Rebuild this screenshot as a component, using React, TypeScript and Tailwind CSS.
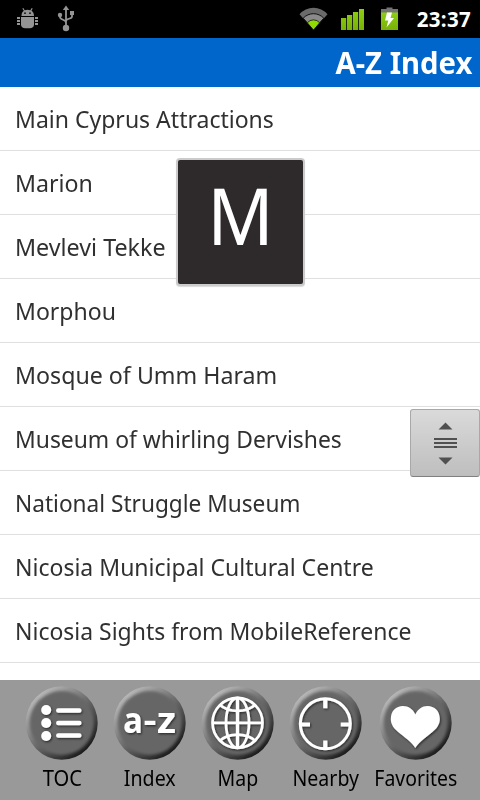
import type { ReactNode } from "react";
import clsx from "clsx";

// fit: horizontal scale that gives the title its condensed width
const entries = [
  { title: "Main Cyprus Attractions", fit: "scale-x-[0.959]" },
  { title: "Marion", fit: "scale-x-[0.965]" },
  { title: "Mevlevi Tekke", fit: "scale-x-[0.97]" },
  { title: "Morphou", fit: "scale-x-[0.96]" },
  { title: "Mosque of Umm Haram", fit: "scale-x-[0.966]" },
  { title: "Museum of whirling Dervishes", fit: "scale-x-[0.953]" },
  { title: "National Struggle Museum", fit: "scale-x-[0.943]" },
  { title: "Nicosia Municipal Cultural Centre", fit: "scale-x-[0.959]" },
  { title: "Nicosia Sights from MobileReference", fit: "scale-x-[0.957]" },
];

function StatusBar() {
  return (
    <div className="flex h-[38px] shrink-0 items-center bg-black text-white">
      <svg className="ml-4 h-[38px] w-6" viewBox="16 0 24 38" fill="#949494">
        <path d="M21.500 16c0-2.500.8-4 2.300-5.200L22.300 8.500l1-.6 1.400 2.300a8 8 0 0 1 5.600 0l1.400-2.300 1 .6-1.200 2.300c1.700 1.200 2.500 2.700 2.500 5.200z" />
        <path d="M21 17h13v7.500c0 2.500-1.800 3.700-4.200 3.700h-4.600c-2.400 0-4.200-1.200-4.200-3.700z" />
        <path d="M17 17h3v2h-3zM17 20h3v2h-3zM17 23h3v2h-3zM35 17h3v2h-3zM35 20h3v2h-3zM35 23h3v2h-3z" />
        <circle cx="25" cy="13.200" r=".9" fill="#111" />
        <circle cx="30" cy="13.200" r=".9" fill="#111" />
      </svg>
      <svg className="ml-4 h-[38px] w-5" viewBox="56 0 20 38" fill="none" stroke="#949494" strokeWidth="1.800">
        <path d="M66 9v18M60 16v1c0 3 6 2.500 6 5.500M72 14v2.500c0 3-6 1.500-6 4.500" />
        <path d="m66 5.500 3.200 4.500h-6.400z" fill="#949494" stroke="none" />
        <circle cx="66" cy="28" r="3.200" fill="#949494" stroke="none" />
        <circle cx="60" cy="15" r="2.200" fill="#949494" stroke="none" />
        <path d="M70 11h4v4h-4z" fill="#949494" stroke="none" />
      </svg>

      <svg className="ml-auto h-[38px] w-8" viewBox="299 0 32 38">
        <path d="M299.500 14.200a18.500 18.500 0 0 1 28 0l-4 4.500h-20z" fill="#6a6a6a" />
        <path d="M303.200 18.200a14 14 0 0 1 20.600 0l-4.500 5h-11.600z" fill="#8a8a8a" stroke="#111" strokeWidth="1" />
        <path d="M307.300 22.800a8 8 0 0 1 12.400 0L313.500 30z" fill="#8edc00" stroke="#111" strokeWidth=".8" />
      </svg>
      <svg className="ml-[9px] h-[38px] w-6" viewBox="339 0 24 38">
        <defs>
          <linearGradient id="lime" x1="0" y1="0" x2="0" y2="1">
            <stop offset="0" stopColor="#8fce14" />
            <stop offset="1" stopColor="#78b206" />
          </linearGradient>
        </defs>
        <path d="M340 18h5.200v12H340zM346 15h5.200v15H346zM352 12h5.200v18H352zM358 9h5v21h-5z" fill="url(#lime)" />
      </svg>
      <svg className="ml-[17px] h-[38px] w-[18px]" viewBox="380.500 0 18 38">
        <path d="M386 7.500h6V9h5.500v4h-17V9h5.500z" fill="#747474" />
        <path d="M380.500 12.500h17V30h-17z" fill="url(#lime)" />
        <path d="M386.500 12.500h5l-1.500 5.500h3.500l-7.500 9.500 1.800-7h-3.300z" fill="#fff" />
      </svg>
      <span className="mr-[9px] ml-[18px] flex w-[54px] justify-end font-['Open_Sans',sans-serif] text-[20.5px] font-bold tracking-[0.3px] whitespace-nowrap">
        23:37
      </span>
    </div>
  );
}

function RoundButton({ children }: { children: ReactNode }) {
  return (
    <svg className="h-[76px] w-[76px]" viewBox="0 0 76 76">
      <defs>
        <linearGradient id="rim" x1="0.150" y1="0.100" x2="0.850" y2="0.900">
          <stop offset="0" stopColor="#bcbcbc" />
          <stop offset="0.300" stopColor="#8c8c8c" />
          <stop offset="0.600" stopColor="#5a5a5a" />
          <stop offset="1" stopColor="#161616" />
        </linearGradient>
        <filter id="soft" x="-20%" y="-20%" width="140%" height="140%">
          <feGaussianBlur stdDeviation="1.600" />
        </filter>
        <filter id="drop" x="-20%" y="-20%" width="150%" height="150%">
          <feDropShadow dx="1" dy="1.200" stdDeviation="0.900" floodColor="#000" floodOpacity="0.600" />
        </filter>
      </defs>
      <ellipse cx="37.700" cy="38" rx="36" ry="36.700" fill="url(#rim)" />
      <circle cx="37.700" cy="38" r="32" fill="#666" filter="url(#soft)" />
      <g filter="url(#drop)">{children}</g>
    </svg>
  );
}

function TocIcon() {
  return (
    <g fill="#fff">
      <circle cx="22.200" cy="25" r="5" />
      <circle cx="22.200" cy="38" r="5" />
      <circle cx="22.200" cy="51" r="5" />
      <path d="M34.300 25.500h21M34.300 38h21M34.300 50.500h21" stroke="#fff" strokeWidth="4.500" strokeLinecap="round" />
    </g>
  );
}

function AzIcon() {
  return (
    <g fill="#fff" fontFamily="'Open Sans', sans-serif" fontWeight="700" fontSize="36">
      <text x="11" y="47.500" textLength="20" lengthAdjust="spacingAndGlyphs">
        a
      </text>
      <text x="31.500" y="47" textLength="13" lengthAdjust="spacingAndGlyphs" fontSize="34">
        -
      </text>
      <text x="45" y="47.500" textLength="19" lengthAdjust="spacingAndGlyphs">
        z
      </text>
    </g>
  );
}

function GlobeIcon() {
  return (
    <g fill="none" stroke="#fff" strokeWidth="2.700">
      <circle cx="37.500" cy="37.800" r="25" />
      <ellipse cx="37.500" cy="37.800" rx="11.500" ry="25" />
      <path d="M37.500 13v50" strokeWidth="3.300" />
      <path d="M12.500 37.800h50M19.500 19.500c9 8.500 27 8.500 36 0M19.500 56c9-8.500 27-8.500 36 0" />
    </g>
  );
}

function CrosshairIcon() {
  return (
    <g fill="none" stroke="#fff">
      <circle cx="37.300" cy="38.800" r="25" strokeWidth="3" />
      <path d="M37.300 13v10.300M37.300 55.500V65M11.500 39.500H22M52.700 39.500H63" strokeWidth="4.200" />
    </g>
  );
}

function HeartIcon() {
  return (
    <path
      d="M37.300 63C34.500 58 29 54 22 48.500c-6-4.500-9.200-9-9.200-14.500C12.800 26 18 21 25 21c5.500 0 10 3 12.300 8.500C40 24 44 21 49.500 21c7 0 12.300 5 12.300 13 0 5.500-3.200 10-9.200 14.500-7 5.500-12.500 9.500-15.300 14.500z"
      fill="#fff"
    />
  );
}

const tabs = [
  { label: "TOC", cell: "w-[88px]", fit: "scale-x-[0.96]", icon: <TocIcon /> },
  { label: "Index", cell: "w-[88px]", fit: "scale-x-[0.935]", icon: <AzIcon /> },
  { label: "Map", cell: "w-[88px]", fit: "scale-x-[0.93]", icon: <GlobeIcon /> },
  { label: "Nearby", cell: "w-[88px]", fit: "scale-x-[0.93]", icon: <CrosshairIcon /> },
  { label: "Favorites", cell: "w-[91px]", fit: "scale-x-[0.925]", icon: <HeartIcon /> },
];

export default function App() {
  return (
    <div className="relative flex h-[800px] w-[480px] flex-col overflow-hidden bg-white font-['Noto_Sans','Open_Sans',sans-serif]">
      <StatusBar />
      <header className="flex h-[49px] shrink-0 items-center justify-end bg-[#0066cc] pt-px pr-[7.5px]">
        <h1 className="origin-right scale-x-[0.975] text-[30px] leading-none font-bold whitespace-nowrap text-white">
          A-Z Index
        </h1>
      </header>

      <ul className="min-h-0 flex-1 overflow-hidden">
        {entries.map((entry) => (
          <li key={entry.title} className="flex h-16 items-center border-b border-[#e0e0e0] pt-px pl-[15px]">
            <span className={clsx("origin-left text-[24px] whitespace-nowrap text-[#303030]", entry.fit)}>
              {entry.title}
            </span>
          </li>
        ))}
      </ul>

      <nav className="flex h-[120px] shrink-0 bg-[#999999] pl-[18px]">
        {tabs.map((tab) => (
          <div key={tab.label} className={clsx("flex shrink-0 flex-col items-center pt-[5px]", tab.cell)}>
            <RoundButton>{tab.icon}</RoundButton>
            <span className={clsx("mt-[3px] text-[21px] leading-7 whitespace-nowrap text-black", tab.fit)}>
              {tab.label}
            </span>
          </div>
        ))}
      </nav>

      {/* current letter, shown while fast scrolling */}
      <div className="absolute top-[158px] left-[176px] flex h-32 w-[129px] justify-center rounded-[4px] border-2 border-[#cbcbcb] bg-[#2e2a2b] shadow-[0_1px_1px_rgba(0,0,0,0.15)]">
        <span className="scale-x-[0.94] pt-[15px] pr-px text-[78px] leading-[80px] text-white">M</span>
      </div>

      {/* fast scroll thumb */}
      <div className="absolute top-[409px] right-0 flex h-[68px] w-[70px] items-center justify-center rounded-[3px] border border-[#a8a8a8] border-b-[#808080] bg-linear-to-b from-[#dadada] to-[#bebebe]">
        <svg className="h-11 w-6" viewBox="0 0 24 44" fill="#505050">
          <path d="M5.500 8.500 12.500 1.500l7 7zM5.500 36.500h14l-7 7z" />
          <path d="M1 17h23v2H1zM1 21h23v2H1zM1 25h23v2H1z" />
        </svg>
      </div>
    </div>
  );
}
